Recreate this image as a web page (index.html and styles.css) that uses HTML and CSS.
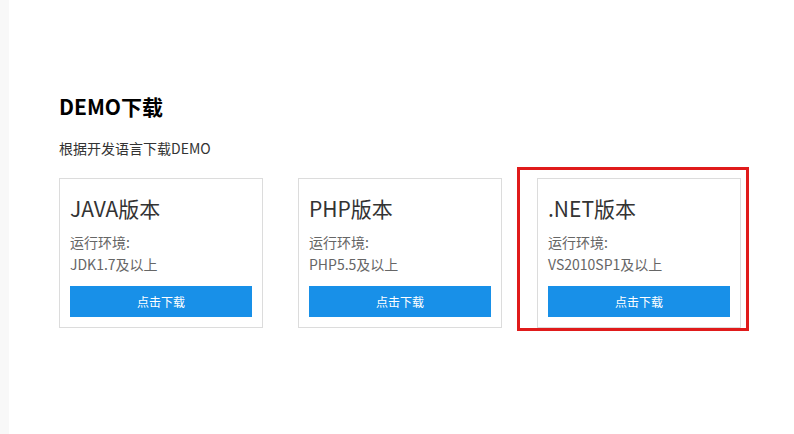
FILE: index.html
```html
<!DOCTYPE html>
<html lang="zh-CN">
<head>
<meta charset="utf-8">
<link rel="stylesheet" href="styles.css">
</head>
<body>
<div class="page">
  <aside class="strip"></aside>
  <main class="main">
    <h1 class="title">DEMO下载</h1>
    <p class="sub">根据开发语言下载DEMO</p>
    <div class="cards">
      <div class="card">
        <h2 class="card-title">JAVA版本</h2>
        <p class="env">运行环境:</p>
        <p class="req">JDK1.7及以上</p>
        <a class="btn">点击下载</a>
      </div>
      <div class="card">
        <h2 class="card-title">PHP版本</h2>
        <p class="env">运行环境:</p>
        <p class="req">PHP5.5及以上</p>
        <a class="btn">点击下载</a>
      </div>
      <div class="card highlighted">
        <h2 class="card-title">.NET版本</h2>
        <p class="env">运行环境:</p>
        <p class="req">VS2010SP1及以上</p>
        <a class="btn">点击下载</a>
        <span class="mark"></span>
      </div>
    </div>
  </main>
</div>
</body>
</html>
```
FILE: styles.css
```css
html, body {
  margin: 0;
  padding: 0;
  background: #fff;
  font-family: "Noto Sans CJK SC", "Noto Sans", sans-serif;
}
.page {
  display: flex;
  min-height: 434px;
}
.strip {
  width: 9px;
  background: #f8f8f8;
  flex: none;
}
.main {
  padding: 92px 0 0 50px;
}
.title {
  margin: 0;
  font-size: 21px;
  line-height: 28px;
  font-weight: 700;
  color: #000;
}
.sub {
  margin: 18px 0 0;
  font-size: 14px;
  line-height: 20px;
  color: #333;
}
.cards {
  display: flex;
  gap: 35px;
  margin-top: 20px;
}
.card {
  position: relative;
  width: 182px;
  padding: 10px;
  border: 1px solid #dcdcdc;
  display: flex;
  flex-direction: column;
}
.card-title {
  margin: 6px 0 0;
  font-size: 21px;
  line-height: 26px;
  font-weight: 400;
  color: #333;
}
.env, .req {
  margin: 0;
  font-size: 14px;
  line-height: 22px;
  color: #666;
}
.env { margin-top: 10px; }
.btn {
  margin-top: 11px;
  height: 31px;
  background: #1890e8;
  color: #fff;
  font-size: 12px;
  line-height: 31px;
  text-align: center;
}
.mark {
  position: absolute;
  left: -21px;
  top: -12px;
  right: -9px;
  bottom: -4px;
  border: 3px solid #e01b1b;
}
```
